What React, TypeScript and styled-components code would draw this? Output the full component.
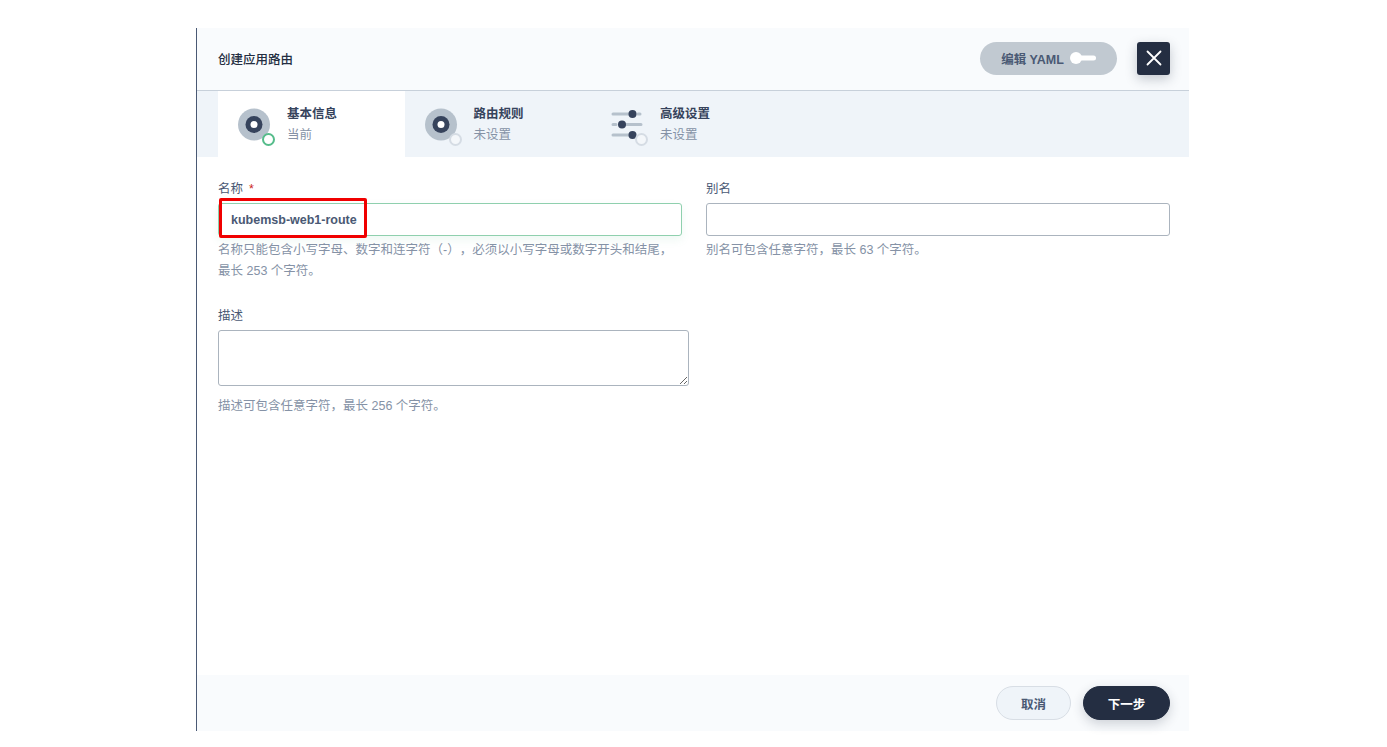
import React from "react";
import styled, { createGlobalStyle } from "styled-components";

const GlobalStyle = createGlobalStyle`
	html, body {
		margin: 0;
		padding: 0;
		background: #fff;
	}
	body {
		font-family: "Liberation Sans", "Noto Sans CJK SC", sans-serif;
		font-size: 12.5px;
		color: #36435c;
		text-spacing-trim: space-all;
	}
	* {
		box-sizing: border-box;
	}
`;

const Page = styled.div`
	width: 1387px;
	height: 747px;
	padding: 28px 0 0 196px;
	overflow: hidden;
`;

const Panel = styled.div`
	width: 993px;
	height: 703px;
	display: flex;
	flex-direction: column;
	border-left: 1px solid #4a5974;
`;

const Header = styled.div`
	height: 63px;
	flex: none;
	display: flex;
	align-items: center;
	justify-content: space-between;
	padding: 0 19px 0 21px;
	background: #f9fbfd;
	border-bottom: 1px solid #c7d0da;
`;

const Title = styled.div`
	font-weight: 500;
	line-height: 20px;
	color: #242e42;
	margin-top: 2px;
`;

const HeaderActions = styled.div`
	display: flex;
	align-items: center;
	gap: 20px;
	margin-bottom: 2px;
`;

const YamlToggle = styled.div`
	width: 137px;
	height: 33px;
	border-radius: 17px;
	background: #c1c9d1;
	display: flex;
	align-items: center;
	justify-content: center;
	gap: 6px;
	font-weight: 700;
	color: #4a5974;
`;

const CloseButton = styled.div`
	width: 33px;
	height: 33px;
	border-radius: 3px;
	background: #242e42;
	display: flex;
	align-items: center;
	justify-content: center;
	box-shadow: 0 4px 12px rgba(36, 46, 66, 0.25);
`;

const Tabs = styled.div`
	height: 66px;
	flex: none;
	display: flex;
	padding-left: 21px;
	background: #eff4f9;
`;

const Tab = styled.div<{ $active?: boolean }>`
	width: 186.5px;
	display: flex;
	align-items: center;
	gap: 16px;
	padding-left: 20px;
	background: ${(props) => (props.$active ? "#fff" : "transparent")};
`;

const TabIcon = styled.div`
	position: relative;
	width: 33px;
	height: 33px;
	flex: none;
`;

const StatusDot = styled.span<{ $active?: boolean }>`
	position: absolute;
	right: -4px;
	bottom: -5px;
	width: 13px;
	height: 13px;
	border-radius: 50%;
	background: ${(props) => (props.$active ? "#fff" : "#f4f7fa")};
	border: 2px solid ${(props) => (props.$active ? "#55bc8a" : "#d5dce4")};
`;

const TabText = styled.div`
	display: flex;
	flex-direction: column;
	gap: 4px;
	padding-top: 1px;
`;

const TabName = styled.div`
	font-weight: 700;
	line-height: 17px;
	color: #36435c;
`;

const TabHint = styled.div`
	line-height: 17px;
	color: #8592a6;
`;

const Body = styled.div`
	flex: 1;
	background: #fff;
	padding: 24px 19px 0 21px;
`;

const Row = styled.div`
	display: grid;
	grid-template-columns: 464px 464px;
	column-gap: 24px;
`;

const Field = styled.div<{ $width?: number }>`
	position: relative;
	width: ${(props) => (props.$width ? `${props.$width}px` : "auto")};
`;

const Label = styled.label`
	display: block;
	line-height: 17px;
	margin-bottom: 5px;
	color: #4a5974;
`;

const Required = styled.span`
	color: #ca2621;
	margin-left: 6px;
`;

const TextInput = styled.input<{ $valid?: boolean }>`
	display: block;
	width: 100%;
	height: 33px;
	padding: 0 12px;
	border-radius: 3px;
	outline: none;
	border: 1px solid ${(props) => (props.$valid ? "#8fd0ae" : "#abb4be")};
	box-shadow: ${(props) => (props.$valid ? "0 4px 8px rgba(85, 188, 138, 0.1)" : "none")};
	background: #fff;
	font: 700 12.5px "Liberation Sans", "Noto Sans CJK SC", sans-serif;
	color: #4a5974;
`;

const TextArea = styled.textarea`
	display: block;
	width: 100%;
	height: 56px;
	border-radius: 3px;
	outline: none;
	border: 1px solid #abb4be;
	background: #fff;
`;

const Hint = styled.div<{ $top: number }>`
	margin-top: ${(props) => props.$top}px;
	line-height: 21px;
	color: #8592a6;
`;

const DescField = styled(Field)`
	margin-top: 26px;
`;

const Annotation = styled.div`
	position: absolute;
	left: 1px;
	top: 17px;
	width: 148px;
	height: 40px;
	border: 3px solid #f00000;
	border-radius: 2px;
	pointer-events: none;
`;

const Footer = styled.div`
	height: 56px;
	flex: none;
	display: flex;
	align-items: center;
	justify-content: flex-end;
	gap: 12px;
	padding: 0 19px 0 0;
	background: #f9fbfd;
`;

const Button = styled.div<{ $primary?: boolean }>`
	height: 34px;
	border-radius: 17px;
	display: flex;
	align-items: center;
	justify-content: center;
	font-weight: 700;
	width: ${(props) => (props.$primary ? "87px" : "75px")};
	background: ${(props) => (props.$primary ? "#242e42" : "#eff4f9")};
	color: ${(props) => (props.$primary ? "#fff" : "#4a5974")};
	border: 1px solid ${(props) => (props.$primary ? "#242e42" : "#d8dee5")};
	box-shadow: ${(props) => (props.$primary ? "0 4px 12px rgba(36, 46, 66, 0.2)" : "none")};
`;

const DiscIcon = () => (
	<svg width='33' height='33' viewBox='0 0 33 33'>
		<circle cx='16' cy='16.5' r='16' fill='#b6c1cc' />
		<circle cx='16' cy='16.5' r='8.500' fill='#36435c' />
		<circle cx='16' cy='16.5' r='3.500' fill='#fff' />
	</svg>
);

const SlidersIcon = () => (
	<svg width='33' height='33' viewBox='0 0 33 33'>
		<g stroke='#b6c1cc' strokeWidth='3' strokeLinecap='round'>
			<path d='M2 6h19M27 6h2' />
			<path d='M2 16.500h3M15 16.500h15' />
			<path d='M2 27h16' />
		</g>
		<circle cx='21.500' cy='6' r='4' fill='#36435c' />
		<circle cx='11' cy='16.500' r='4' fill='#36435c' />
		<circle cx='21.500' cy='27' r='4' fill='#36435c' />
	</svg>
);

const steps = [
	{ name: "基本信息", hint: "当前", active: true, icon: <DiscIcon /> },
	{ name: "路由规则", hint: "未设置", icon: <DiscIcon /> },
	{ name: "高级设置", hint: "未设置", icon: <SlidersIcon /> },
];

const App: React.FC = () => {
	return (
		<Page>
			<GlobalStyle />
			<Panel>
				<Header>
					<Title>创建应用路由</Title>
					<HeaderActions>
						<YamlToggle>
							编辑 YAML
							<svg width='26' height='14' viewBox='0 0 26 14'>
								<rect x='6' y='4.500' width='20' height='5' rx='2.500' fill='#fff' />
								<circle cx='6' cy='7' r='6' fill='#fff' />
							</svg>
						</YamlToggle>
						<CloseButton>
							<svg width='16' height='16' viewBox='0 0 16 16'>
								<path d='M1.500 1.500l13 13M14.500 1.500l-13 13' stroke='#fff' strokeWidth='1.800' strokeLinecap='round' />
							</svg>
						</CloseButton>
					</HeaderActions>
				</Header>
				<Tabs>
					{steps.map((step) => (
						<Tab key={step.name} $active={step.active}>
							<TabIcon>
								{step.icon}
								<StatusDot $active={step.active} />
							</TabIcon>
							<TabText>
								<TabName>{step.name}</TabName>
								<TabHint>{step.hint}</TabHint>
							</TabText>
						</Tab>
					))}
				</Tabs>
				<Body>
					<Row>
						<Field>
							<Label>
								名称<Required>*</Required>
							</Label>
							<TextInput $valid defaultValue='kubemsb-web1-route' />
							<Annotation />
							<Hint $top={4}>名称只能包含小写字母、数字和连字符（-），必须以小写字母或数字开头和结尾，最长 253 个字符。</Hint>
						</Field>
						<Field>
							<Label>别名</Label>
							<TextInput />
							<Hint $top={4}>别名可包含任意字符，最长 63 个字符。</Hint>
						</Field>
					</Row>
					<DescField $width={471}>
						<Label>描述</Label>
						<TextArea />
						<Hint $top={10}>描述可包含任意字符，最长 256 个字符。</Hint>
					</DescField>
				</Body>
				<Footer>
					<Button>取消</Button>
					<Button $primary>下一步</Button>
				</Footer>
			</Panel>
		</Page>
	);
};

export default App;
